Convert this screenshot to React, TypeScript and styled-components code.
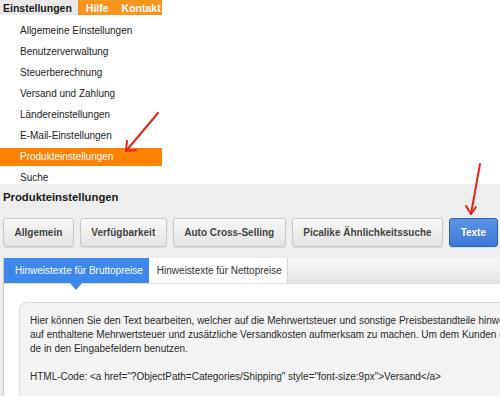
import React from 'react';
import styled, { createGlobalStyle } from 'styled-components';

const GlobalStyle = createGlobalStyle`
  html, body {
    margin: 0;
    padding: 0;
    background: #fff;
    overflow: hidden;
  }
  body {
    font-family: "Liberation Sans", Arial, sans-serif;
    font-size: 10px;
    color: #222;
  }
`;

const Page = styled.div`
  position: relative;
  width: 500px;
  height: 396px;
  overflow: hidden;
`;

const TopMenu = styled.div`
  display: flex;
  height: 15px;
  width: 162px;
  overflow: hidden;
`;

const MenuItem = styled.div<{ $active?: boolean; $last?: boolean }>`
  display: flex;
  align-items: center;
  flex-shrink: 0;
  padding-left: ${(p) => (p.$active ? '3px' : p.$last ? '7px' : '8px')};
  padding-right: ${(p) => (p.$active ? '6px' : p.$last ? '0' : '6px')};
  background: ${(p) => (p.$active ? '#e9e9e9' : '#f7941d')};
  color: ${(p) => (p.$active ? '#1a1a1a' : '#fff')};
  font-weight: bold;
  font-size: 10.5px;
  white-space: nowrap;
`;

const MenuFill = styled.div`
  flex: 1;
  background: #f7941d;
`;

const Dropdown = styled.ul`
  list-style: none;
  margin: 0;
  padding: 7px 0 0;
  width: 162px;
  height: 162px;
  overflow: hidden;
  box-sizing: content-box;
`;

const DropItem = styled.li<{ $selected?: boolean }>`
  height: 18px;
  line-height: 18px;
  margin-bottom: 3px;
  padding-left: 20px;
  font-size: 10px;
  color: ${(p) => (p.$selected ? '#fff' : '#222')};
  background: ${(p) => (p.$selected ? '#fd8103' : 'transparent')};
`;

const Section = styled.div`
  background: #eeeeee;
  padding: 5px 0 0 3px;
  height: 212px;
`;

const Heading = styled.h2`
  margin: 0;
  font-size: 11.3px;
  font-weight: bold;
  color: #1a1a1a;
  line-height: 16px;
`;

const ButtonRow = styled.div`
  display: flex;
  gap: 6px;
  margin-top: 13px;
`;

const TabButton = styled.button<{ $primary?: boolean }>`
  height: 29px;
  padding: 0 10.5px;
  font-family: "Liberation Sans", Arial, sans-serif;
  font-size: 10px;
  font-weight: bold;
  border-radius: 3px;
  border: 1px solid ${(p) => (p.$primary ? '#2f62b5' : '#c9c9c9')};
  color: ${(p) => (p.$primary ? '#fff' : '#444')};
  background: ${(p) =>
    p.$primary
      ? 'linear-gradient(#5a95e6, #3e78d4)'
      : 'linear-gradient(#f8f8f8, #e3e3e3)'};
  box-shadow: 0 1px 1px rgba(0, 0, 0, 0.08);
  white-space: nowrap;
`;

const Panel = styled.div`
  margin-top: 11px;
  border-left: 1px solid #c8c8c8;
  background: #fff;
  height: 200px;
`;

const TabStrip = styled.div`
  display: flex;
  height: 25px;
  background: linear-gradient(#f6f6f6, #e6e6e6);
  border-bottom: 1px solid #e0e0e0;
`;

const Tab = styled.div<{ $active?: boolean }>`
  position: relative;
  display: flex;
  align-items: center;
  padding: ${(p) => (p.$active ? '0 6px 0 11px' : '0 5px 0 8px')};
  font-size: 10px;
  color: ${(p) => (p.$active ? '#fff' : '#333')};
  background: ${(p) => (p.$active ? '#3d86ea' : '#fff')};
  border-right: ${(p) => (p.$active ? 'none' : '1px solid #d6d6d6')};
  white-space: nowrap;

  ${(p) =>
    p.$active &&
    `
    &::after {
      content: '';
      position: absolute;
      left: 50%;
      bottom: -7px;
      margin-left: -6px;
      border-left: 6px solid transparent;
      border-right: 6px solid transparent;
      border-top: 7px solid #3d86ea;
    }
  `}
`;

const InfoBox = styled.div`
  margin: 18px 0 0 15px;
  padding: 11px 0 0 10px;
  background: #f3f3f3;
  border: 1px solid #dcdcdc;
  border-right: none;
  border-radius: 8px 0 0 8px;
  height: 120px;
  font-size: 10px;
  line-height: 14px;
  color: #2a2a2a;
`;

const Line = styled.div`
  white-space: nowrap;
  overflow: hidden;
  min-height: 14px;
`;

const Arrows = styled.svg`
  position: absolute;
  left: 0;
  top: 0;
  pointer-events: none;
`;

const menuItems = [
  'Allgemeine Einstellungen',
  'Benutzerverwaltung',
  'Steuerberechnung',
  'Versand und Zahlung',
  'Ländereinstellungen',
  'E-Mail-Einstellungen',
  'Produkteinstellungen',
  'Suche',
];

const buttons = ['Allgemein', 'Verfügbarkeit', 'Auto Cross-Selling', 'Picalike Ähnlichkeitssuche', 'Texte'];

export default function App() {
  return (
    <Page>
      <GlobalStyle />
      <TopMenu>
        <MenuItem $active>Einstellungen</MenuItem>
        <MenuItem>Hilfe</MenuItem>
        <MenuItem $last>Kontakt</MenuItem>
        <MenuFill />
      </TopMenu>
      <Dropdown>
        {menuItems.map((m) => (
          <DropItem key={m} $selected={m === 'Produkteinstellungen'}>
            {m}
          </DropItem>
        ))}
      </Dropdown>
      <Section>
        <Heading>Produkteinstellungen</Heading>
        <ButtonRow>
          {buttons.map((b) => (
            <TabButton key={b} $primary={b === 'Texte'}>
              {b}
            </TabButton>
          ))}
        </ButtonRow>
        <Panel>
          <TabStrip>
            <Tab $active>Hinweistexte für Bruttopreise</Tab>
            <Tab>Hinweistexte für Nettopreise</Tab>
          </TabStrip>
          <InfoBox>
            <Line>Hier können Sie den Text bearbeiten, welcher auf die Mehrwertsteuer und sonstige Preisbestandteile hinwei</Line>
            <Line>auf enthaltene Mehrwertsteuer und zusätzliche Versandkosten aufmerksam zu machen. Um dem Kunden d</Line>
            <Line>de in den Eingabefeldern benutzen.</Line>
            <Line />
            <Line>
              HTML-Code: &lt;a href="?ObjectPath=Categories/Shipping" style="font-size:9px"&gt;Versand&lt;/a&gt;
            </Line>
          </InfoBox>
        </Panel>
      </Section>
      <Arrows width="500" height="396" viewBox="0 0 500 396">
        <g stroke="#e8221b" strokeWidth="2" fill="none" strokeLinecap="round" strokeLinejoin="round">
          <path d="M158 113 L126 151" />
          <path d="M127 141 L126 151 L136 150" />
          <path d="M480 164 L471 214" />
          <path d="M466 206 L471 214 L476 207" />
        </g>
      </Arrows>
    </Page>
  );
}
